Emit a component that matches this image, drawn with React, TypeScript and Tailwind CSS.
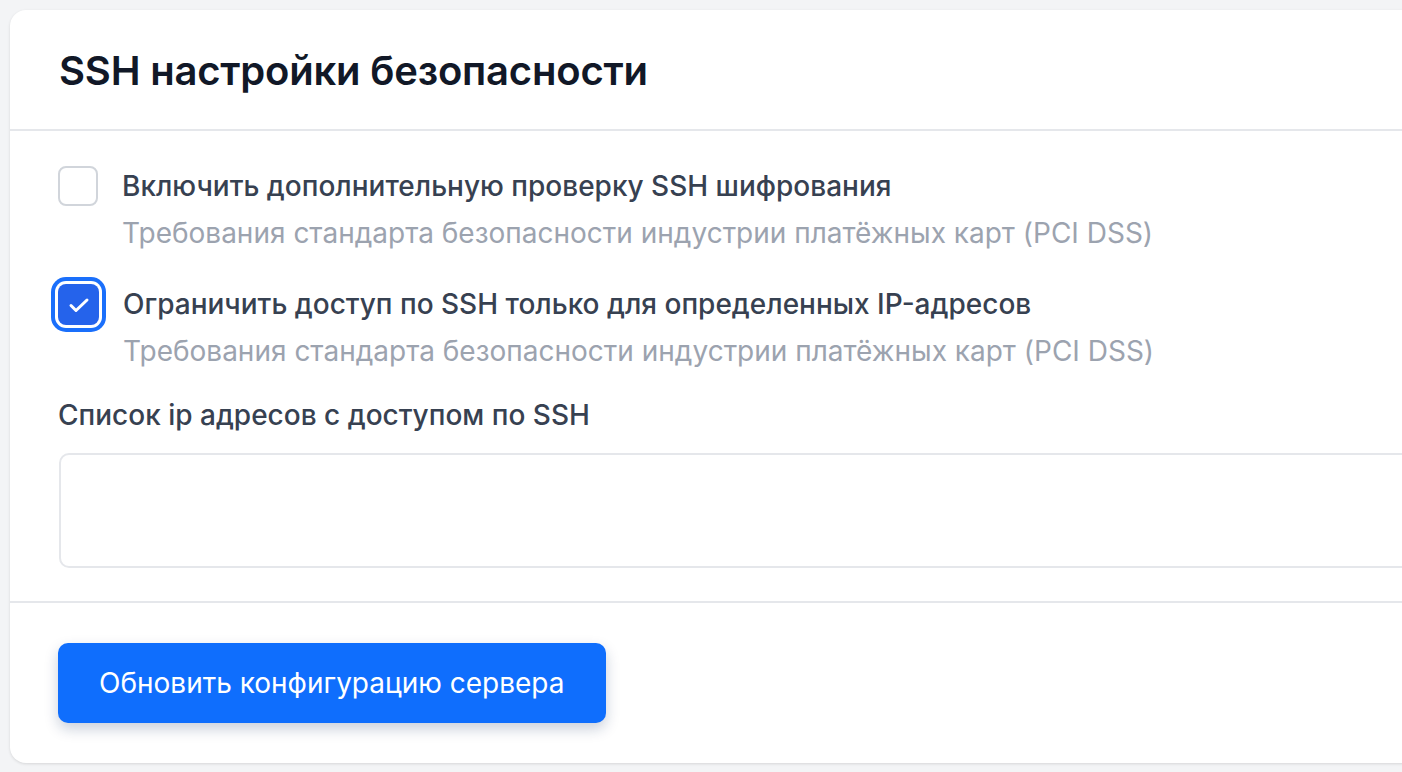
import React, { useState } from 'react';

const font = { fontFamily: 'Inter, "Noto Sans", sans-serif' };

interface OptionProps {
  checked: boolean;
  focused?: boolean;
  label: string;
  hint: string;
  onToggle: () => void;
}

const Option: React.FC<OptionProps> = ({ checked, focused, label, hint, onToggle }) => (
  <label className="flex items-start gap-[24px] cursor-pointer">
    <button
      type="button"
      onClick={onToggle}
      className={
        checked
          ? 'w-[41px] h-[41px] shrink-0 rounded-[8px] bg-[#2563eb] flex items-center justify-center ' +
            (focused ? 'ring-[4px] ring-[#1a6ffb] ring-offset-[3px] ring-offset-white' : '')
          : 'w-[40px] h-[40px] shrink-0 rounded-[8px] border-2 border-[#d1d5db] bg-white'
      }
    >
      {checked && (
        <svg className="w-[22px] h-[22px]" viewBox="0 0 22 22" fill="none">
          <path d="M3 11.5l5 5L19 6" stroke="white" strokeWidth="3" strokeLinecap="round" strokeLinejoin="round" />
        </svg>
      )}
    </button>
    <div className="flex flex-col">
      <span className="text-[28px] leading-[40px] text-[#374151] font-medium">{label}</span>
      <span className="mt-[7px] text-[28px] leading-[40px] text-[#9ca3af]">{hint}</span>
    </div>
  </label>
);

export default function App() {
  const [cipher, setCipher] = useState(false);
  const [restrict, setRestrict] = useState(true);

  return (
    <div className="min-h-screen bg-[#f3f4f6] pt-[10px] pl-[10px] overflow-hidden" style={font}>
      <div className="w-[1440px] bg-white rounded-[16px] shadow-[0_1px_3px_rgba(0,0,0,0.12)]">
        {/* Header */}
        <div className="h-[121px] px-[49px] pt-[2px] flex items-center border-b-2 border-[#e5e7eb]">
          <h1 className="text-[40px] font-semibold text-[#111827] tracking-[-0.2px]">SSH настройки безопасности</h1>
        </div>

        {/* Body */}
        <div className="pt-[35px] pb-[33px] pl-[48px] flex flex-col">
          <Option
            checked={cipher}
            label="Включить дополнительную проверку SSH шифрования"
            hint="Требования стандарта безопасности индустрии платёжных карт (PCI DSS)"
            onToggle={() => setCipher(!cipher)}
          />
          <div className="mt-[31px]">
            <Option
              checked={restrict}
              focused
              label="Ограничить доступ по SSH только для определенных IP-адресов"
              hint="Требования стандарта безопасности индустрии платёжных карт (PCI DSS)"
              onToggle={() => setRestrict(!restrict)}
            />
          </div>
          <label className="mt-[24px] text-[28px] leading-[40px] text-[#374151] font-medium">
            Список ip адресов с доступом по SSH
          </label>
          <textarea className="mt-[18px] ml-px h-[115px] w-[1400px] rounded-[10px] border-2 border-[#e5e7eb] resize-none outline-none px-4 py-3 text-[28px]" />
        </div>

        {/* Footer */}
        <div className="border-t-2 border-[#e5e7eb] pt-[40px] pb-[40px] pl-[48px]">
          <button className="h-[80px] px-[41px] rounded-[10px] bg-[#0f6efd] text-white text-[28px] shadow-[0_6px_14px_rgba(15,40,90,0.22)]">
            Обновить конфигурацию сервера
          </button>
        </div>
      </div>
    </div>
  );
}
